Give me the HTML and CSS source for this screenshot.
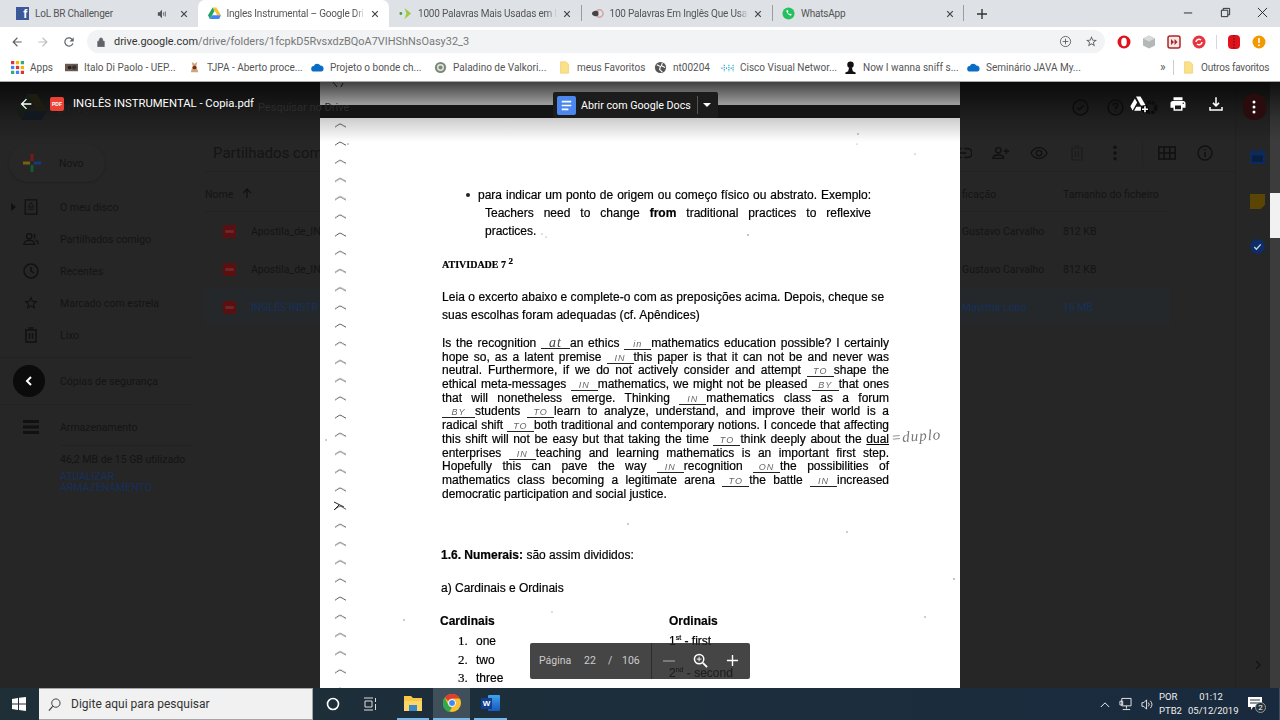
FILE: index.html
```html
<!DOCTYPE html>
<html lang="en">
<head>
    <meta charset="UTF-8">
    <meta name="viewport" content="width=device-width, initial-scale=1.0">
    <title>Ingles Instrumental - Google Drive</title>
    <link rel="stylesheet" href="styles.css">
</head>
<body>
    <svg class="sprite">
        <symbol id="close" viewBox="0 0 10 10"><path d="M1.5 1.5l7 7M8.5 1.5l-7 7" fill="none" stroke="currentColor" stroke-width="1.5"/></symbol>
        <symbol id="folder" viewBox="0 0 12 16"><path d="M1 1h7l3 3v11H1z" fill="#fbe08a" stroke="#e8c860" stroke-width=".7"/></symbol>
        <symbol id="cloud" viewBox="0 0 16 11"><path d="M4 10.500a3.500 3.500 0 0 1-.5-7A4.500 4.500 0 0 1 11.500 3 3.800 3.800 0 0 1 12.500 10.500z" fill="#0a6cc4"/></symbol>
        <symbol id="pdf" viewBox="0 0 14 14"><rect width="14" height="14" rx="1.500" fill="currentColor"/><rect x="2.500" y="5.500" width="9" height="3" fill="#6c2a2a"/></symbol>
    </svg>

    <!-- Tab strip -->
    <div class="tabstrip">
        <div class="tab">
            <span class="fav fav-fb">f</span>
            <span class="tab-title">LoL BR Challenger</span>
            <svg class="tab-sound" viewBox="0 0 12 12"><path d="M1 4h2l3-3v10L3 8H1z" fill="#555"/><path d="M8 4v4M10 3v6" stroke="#555" fill="none"/></svg>
            <svg class="tab-close"><use href="#close"/></svg>
        </div>
        <div class="tab tab-active">
            <svg class="fav" viewBox="0 0 14 13"><path d="M5 0h4l5 8.500h-4z" fill="#fbc02d"/><path d="M5 0l2 3.800L2 12.500 0 8.500z" fill="#1fa463"/><path d="M2 12.500l2.200-4H14l-2 4z" fill="#4285f4"/></svg>
            <span class="tab-title tab-fade">Ingles Instrumental – Google Dri</span>
            <svg class="tab-close"><use href="#close"/></svg>
        </div>
        <div class="tab tab-sep">
            <svg class="fav" viewBox="0 0 14 14"><circle cx="2" cy="7" r="1.500" fill="#43a047"/><path d="M6 1l7 6-7 6 2-6z" fill="#9ccc3c"/></svg>
            <span class="tab-title tab-fade">1000 Palavras Mais Usadas em In</span>
            <svg class="tab-close"><use href="#close"/></svg>
        </div>
        <div class="tab tab-sep">
            <svg class="fav" viewBox="0 0 14 14"><circle cx="9" cy="7" r="4" fill="none" stroke="#d0a0a0" stroke-width="1.500"/><path d="M1 7a4 3 0 0 1 7-2v4a4 3 0 0 1-7-2z" fill="#444"/></svg>
            <span class="tab-title tab-fade">100 Palavras Em Inglês Que Usan</span>
            <svg class="tab-close"><use href="#close"/></svg>
        </div>
        <div class="tab tab-sep tab-last">
            <svg class="fav" viewBox="0 0 14 14"><circle cx="7" cy="7" r="6.500" fill="#25c15f"/><path d="M4.500 4c1 3 2.500 4.500 5 5.500l1-1.500-2-1-.7.700C7 7.200 6.500 6.500 6.200 5.700l.7-.7-1-2z" fill="#fff"/></svg>
            <span class="tab-title">WhatsApp</span>
            <svg class="tab-close"><use href="#close"/></svg>
        </div>
        <svg class="newtab" viewBox="0 0 12 12"><path d="M6 1v10M1 6h10" stroke="#333" stroke-width="1.400"/></svg>
        <div class="winbtns">
            <svg viewBox="0 0 12 12"><path d="M1 6.500h9" stroke="#222"/></svg>
            <svg viewBox="0 0 12 12"><path d="M1.500 3.500h7v7h-7zM3.500 3.500v-2h7v7h-2" fill="none" stroke="#222"/></svg>
            <svg viewBox="0 0 12 12"><path d="M1 1l10 10M11 1L1 11" stroke="#222"/></svg>
        </div>
    </div>

    <!-- Address bar -->
    <div class="toolbar">
        <svg class="nav-icon" viewBox="0 0 24 24"><path d="M20 11H7.830l5.590-5.590L12 4l-8 8 8 8 1.410-1.410L7.830 13H20z" fill="#5f6368"/></svg>
        <svg class="nav-icon" viewBox="0 0 24 24"><path d="M4 11h12.170l-5.590-5.590L12 4l8 8-8 8-1.410-1.410L16.170 13H4z" fill="#bcbfc3"/></svg>
        <svg class="nav-icon" viewBox="0 0 24 24"><path d="M17.650 6.350A8 8 0 1 0 19.730 14h-2.080A6 6 0 1 1 12 6c1.660 0 3.140.690 4.220 1.780L13 11h7V4z" fill="#5f6368"/></svg>
        <div class="omnibox">
            <svg class="lock" viewBox="0 0 10 12"><path d="M1 5h8v7H1zM3 5V3a2 2 0 0 1 4 0v2" fill="#5f6368" stroke="#5f6368"/></svg>
            <span class="url"><b>drive.google.com</b>/drive/folders/1fcpkD5RvsxdzBQoA7VIHShNsOasy32_3</span>
            <svg class="omni-icon" viewBox="0 0 14 14"><circle cx="7" cy="7" r="5.500" fill="none" stroke="#5f6368"/><path d="M7 4v6M4 7h6" stroke="#5f6368"/></svg>
            <svg class="omni-icon" viewBox="0 0 24 24"><path d="M22 9.240l-7.190-.620L12 2 9.190 8.630 2 9.240l5.460 4.730L5.820 21 12 17.270 18.180 21l-1.630-7.030L22 9.240zM12 15.400l-3.760 2.270 1-4.280-3.320-2.880 4.380-.380L12 6.100l1.710 4.040 4.380.380-3.320 2.880 1 4.280L12 15.400z" fill="#5f6368"/></svg>
        </div>
        <div class="exts">
            <svg class="ext" viewBox="0 0 14 14"><circle cx="7" cy="7" r="6.500" fill="#e0121b"/><ellipse cx="7" cy="7" rx="2.800" ry="4.200" fill="#fff"/></svg>
            <svg class="ext" viewBox="0 0 14 14"><path d="M7 .500l6 3v7l-6 3-6-3v-7z" fill="#b4b8b8"/><path d="M7 .500l6 3-6 3-6-3z" fill="#d8dada"/></svg>
            <svg class="ext" viewBox="0 0 14 14"><rect x="1" y="1" width="12" height="12" rx="2" fill="#fbe5e5" stroke="#a82828" stroke-width="1.500"/><path d="M4 4l3 3-3 3zM7.500 4l3 3-3 3z" fill="#a82828"/></svg>
            <svg class="ext" viewBox="0 0 14 14"><circle cx="7" cy="7" r="6.500" fill="#e8343f"/><path d="M4 7a3 3 0 0 1 5-2M10 7a3 3 0 0 1-5 2" fill="none" stroke="#fff" stroke-width="1.500"/></svg>
            <span class="ext-sep"></span>
            <svg class="ext" viewBox="0 0 14 14"><rect x="1" y="0" width="12" height="14" rx="4" fill="#e0121b"/><path d="M7 0v14" stroke="#5a0a0a" stroke-dasharray="1.500 1.500"/></svg>
            <svg class="ext" viewBox="0 0 14 14"><circle cx="7" cy="7" r="6.500" fill="#f29900"/><path d="M7 3v5M7 9.500v1.500" stroke="#fff" stroke-width="1.600"/></svg>
        </div>
    </div>

    <!-- Bookmarks -->
    <div class="bookmarks">
        <div class="bm bm-apps">
            <svg class="bm-icon" viewBox="0 0 12 12"><path d="M0 0h3v3H0z" fill="#d33"/><path d="M4.500 0h3v3h-3z" fill="#f4b400"/><path d="M9 0h3v3H9z" fill="#3a7"/><path d="M0 4.500h3v3H0z" fill="#4285f4"/><path d="M4.500 4.500h3v3h-3z" fill="#d33"/><path d="M9 4.500h3v3H9z" fill="#f4b400"/><path d="M0 9h3v3H0z" fill="#3a7"/><path d="M4.500 9h3v3h-3z" fill="#4285f4"/><path d="M9 9h3v3H9z" fill="#d33"/></svg>
            Apps
        </div>
        <div class="bm bm-italo"><svg class="bm-icon" viewBox="0 0 14 12"><rect y="2" width="14" height="8" fill="#6b5a50"/><circle cx="5" cy="6" r="2" fill="#222"/><circle cx="10" cy="6" r="2.500" fill="#333"/></svg>Italo Di Paolo - UEP...</div>
        <div class="bm bm-tjpa"><svg class="bm-icon" viewBox="0 0 12 14"><path d="M3 1l3 2 3-2-1 4 2 7H2l2-7z" fill="#c8a878"/><circle cx="6" cy="7" r="2" fill="#8a2020"/></svg>TJPA - Aberto proce...</div>
        <div class="bm bm-bonde"><svg class="bm-icon"><use href="#cloud"/></svg>Projeto o bonde ch...</div>
        <div class="bm bm-valk"><svg class="bm-icon" viewBox="0 0 14 14"><circle cx="7" cy="7" r="6" fill="#7a8a7a"/><circle cx="7" cy="7" r="3" fill="none" stroke="#e8e8e0" stroke-width="1.500"/></svg>Paladino de Valkori...</div>
        <div class="bm bm-fav"><svg class="bm-icon"><use href="#folder"/></svg>meus Favoritos</div>
        <div class="bm bm-nt"><svg class="bm-icon" viewBox="0 0 14 14"><circle cx="7" cy="7" r="6" fill="#555"/><path d="M3 4l4 2-1 3 3 3M9 2l-1 3 4 2" fill="none" stroke="#fff" stroke-width="1.200"/></svg>nt00204</div>
        <div class="bm bm-cisco"><svg class="bm-icon" viewBox="0 0 14 12"><path d="M1 6v2M3.500 3v7M6 6v2M8.500 3v7M11 6v2M13 3v7" stroke="#2aa5c9" stroke-width="1.200" stroke-dasharray="1.500 .8"/></svg>Cisco Visual Networ...</div>
        <div class="bm bm-sniff"><svg class="bm-icon" viewBox="0 0 14 14"><circle cx="7" cy="4" r="3.500" fill="#111"/><path d="M5.500 7h3l1 4 3 1.500V14h-11v-1.500l3-1.500z" fill="#111"/></svg>Now I wanna sniff s...</div>
        <div class="bm bm-java"><svg class="bm-icon"><use href="#cloud"/></svg>Seminário JAVA My...</div>
        <span class="bm-more">»</span>
        <span class="bm-sep"></span>
        <div class="bm bm-other"><svg class="bm-icon"><use href="#folder"/></svg>Outros favoritos</div>
    </div>

    <!-- Drive dimmed behind the viewer, PDF page on top -->
    <div class="viewer">
        <div class="drive">
            <aside class="sidebar">
                <div class="novo">
                    <svg viewBox="0 0 20 20"><path d="M10 1v7" stroke="#7a1a15" stroke-width="3"/><path d="M10 12v7" stroke="#145a30" stroke-width="3"/><path d="M1 10h7" stroke="#7a6008" stroke-width="3"/><path d="M12 10h7" stroke="#123a80" stroke-width="3"/></svg>
                    Novo
                </div>
                <div class="side-item"><svg viewBox="0 0 16 18"><path d="M1.500 1h13v16h-13z" fill="none" stroke="#111" stroke-width="1.500"/><path d="M8 4l3 5H5zM5 11.500h6" fill="none" stroke="#111"/></svg>O meu disco<i class="caret"></i></div>
                <div class="side-item"><svg viewBox="0 0 18 14"><circle cx="7" cy="4" r="3" fill="none" stroke="#111" stroke-width="1.500"/><path d="M1 13c0-6 12-6 12 0zM12 1.500a3 3 0 0 1 0 5M14 8c2 .500 3 2 3 5" fill="none" stroke="#111" stroke-width="1.500"/></svg>Partilhados comigo</div>
                <div class="side-item"><svg viewBox="0 0 16 16"><circle cx="8" cy="8" r="7" fill="none" stroke="#111" stroke-width="1.500"/><path d="M8 4v4l3 2" fill="none" stroke="#111" stroke-width="1.500"/></svg>Recentes</div>
                <div class="side-item"><svg viewBox="0 0 24 24"><path d="M22 9.240l-7.190-.620L12 2 9.190 8.630 2 9.240l5.460 4.730L5.820 21 12 17.270 18.180 21l-1.630-7.030L22 9.240zM12 15.400l-3.760 2.270 1-4.280-3.320-2.880 4.380-.380L12 6.100l1.710 4.040 4.380.380-3.320 2.880 1 4.280L12 15.400z" fill="#111"/></svg>Marcado com estrela</div>
                <div class="side-item"><svg viewBox="0 0 14 16"><path d="M1 3h12M2 3v12h10V3M4.500 1h5M5.500 6v6M8.500 6v6" fill="none" stroke="#111" stroke-width="1.500"/></svg>Lixo</div>
                <div class="side-rule"></div>
                <div class="side-item">
                    <span class="collapse"><svg viewBox="0 0 8 12"><path d="M6 2L2 6l4 4" fill="none" stroke="#fff" stroke-width="2"/></svg></span>
                    Cópias de segurança
                </div>
                <div class="side-rule"></div>
                <div class="side-item side-store"><svg viewBox="0 0 16 14"><path d="M0 1.500h16M0 7h16M0 12.500h16" stroke="#111" stroke-width="3"/></svg>Armazenamento</div>
                <div class="store-rule"></div>
                <div class="store-used">46,2 MB de 15 GB utilizado</div>
                <div class="store-link">ATUALIZAR<br>ARMAZENAMENTO</div>
            </aside>

            <main class="files">
                <div class="files-top">
                    <span class="files-title">Partilhados comigo</span>
                    <div class="files-tools">
                        <svg viewBox="0 0 16 10"><path d="M7 1H4a4 4 0 0 0 0 8h3M9 1h3a4 4 0 0 1 0 8H9M5 5h6" fill="none" stroke="#111" stroke-width="1.500"/></svg>
                        <svg viewBox="0 0 20 14"><circle cx="7" cy="4" r="3" fill="none" stroke="#111" stroke-width="1.500"/><path d="M1 13c0-5 12-5 12 0zM16 2v6M13 5h6" fill="none" stroke="#111" stroke-width="1.500"/></svg>
                        <svg viewBox="0 0 20 14"><path d="M1 7c4-8 14-8 18 0-4 8-14 8-18 0z" fill="none" stroke="#111" stroke-width="1.500"/><circle cx="10" cy="7" r="3" fill="none" stroke="#111" stroke-width="1.500"/></svg>
                        <svg viewBox="0 0 14 16"><path d="M1 3h12M2 3v12h10V3M4.500 1h5M5.500 6v6M8.500 6v6" fill="none" stroke="#1c1c1c" stroke-width="1.200"/></svg>
                        <svg viewBox="0 0 4 14"><circle cx="2" cy="2" r="1.500" fill="#111"/><circle cx="2" cy="7" r="1.500" fill="#111"/><circle cx="2" cy="12" r="1.500" fill="#111"/></svg>
                        <span class="tools-sep"></span>
                        <svg viewBox="0 0 16 12"><path d="M.7.700h14.600v10.600H.7zM.7 6h14.600M5.500.700v10.600M10.500.700v10.600" fill="none" stroke="#111" stroke-width="1.400"/></svg>
                        <svg viewBox="0 0 16 16"><circle cx="8" cy="8" r="7" fill="none" stroke="#111" stroke-width="1.400"/><path d="M8 7v5M8 4v1.500" stroke="#111" stroke-width="1.500"/></svg>
                    </div>
                </div>
                <div class="file-row file-head">
                    <span>Nome <svg class="sort" viewBox="0 0 10 10"><path d="M5 10V1M1 5l4-4 4 4" fill="none" stroke="#111" stroke-width="1.300"/></svg></span>
                    <span>ficação</span>
                    <span>Tamanho do ficheiro</span>
                </div>
                <div class="file-row">
                    <span class="file-name"><svg class="pdf-dim"><use href="#pdf"/></svg>Apostila_de_IN</span>
                    <span>Gustavo Carvalho</span>
                    <span>812 KB</span>
                </div>
                <div class="file-row">
                    <span class="file-name"><svg class="pdf-dim"><use href="#pdf"/></svg>Apostila_de_IN</span>
                    <span>Gustavo Carvalho</span>
                    <span>812 KB</span>
                </div>
                <div class="file-row file-picked">
                    <span class="file-name"><svg class="pdf-dim"><use href="#pdf"/></svg>INGLÊS INSTR</span>
                    <span>Mayrtha Lobo</span>
                    <span>16 MB</span>
                </div>
            </main>

            <div class="sidepanel">
                <svg viewBox="0 0 14 14"><path d="M0 2h14v12H0z" fill="#0c2a5e"/><path d="M3 0v3M11 0v3" stroke="#0c2a5e" stroke-width="2"/><path d="M2 6h10v6H2z" fill="#0a1f40"/></svg>
                <svg viewBox="0 0 14 14"><path d="M0 0h14v10l-4 4H0z" fill="#5a4505"/></svg>
                <svg viewBox="0 0 14 14"><circle cx="7" cy="7" r="7" fill="#0e2c66"/><path d="M4 7.500l2 2 4-4.500" fill="none" stroke="#c8d0e0" stroke-width="1.300"/></svg>
                <svg class="panel-toggle" viewBox="0 0 8 12"><path d="M2 2l4 4-4 4" fill="none" stroke="#161616" stroke-width="1.500"/></svg>
            </div>
            <div class="scrollbar"><div class="scroll-thumb"></div></div>
        </div>

        <!-- Scanned page -->
        <div class="page">
            <svg class="rings" viewBox="0 0 640 606">
                <defs>
                    <pattern id="ring" width="40" height="18.200" y="39" patternUnits="userSpaceOnUse">
                        <path d="M15 6c2.500-1.500 4-3 5-3s3 1.500 6 3" fill="none" stroke="#444" stroke-width=".9"/>
                    </pattern>
                </defs>
                <rect width="40" height="606" y="34" fill="url(#ring)"/>
                <path d="M13 0l4 5M23 1l-2 4" stroke="#333" fill="none"/>
                <path d="M14 420l10 5M14 428l5-5" stroke="#222" fill="none"/>
                <!-- specks from the scan -->
                <g fill="#777">
                    <circle cx="28" cy="62" r=".7"/><circle cx="428" cy="153" r=".8"/><circle cx="222" cy="152" r=".6"/>
                    <circle cx="538" cy="52" r=".7"/><circle cx="537" cy="62" r=".5"/><circle cx="595" cy="72" r=".6"/>
                    <circle cx="542" cy="134" r=".7"/><circle cx="226" cy="155" r=".6"/><circle cx="308" cy="442" r=".7"/>
                    <circle cx="527" cy="450" r=".7"/><circle cx="634" cy="497" r=".8"/><circle cx="84" cy="538" r=".7"/>
                    <circle cx="605" cy="535" r=".7"/><circle cx="232" cy="530" r=".6"/><circle cx="6" cy="358" r=".7"/>
                </g>
            </svg>

            <div class="bullet-block">
                <div class="line line-first"><span class="dot"></span>para indicar um ponto de origem ou começo físico ou abstrato. Exemplo:</div>
                <div class="line line-just">Teachers need to change <b>from</b> traditional practices to reflexive</div>
                <div class="line">practices.</div>
            </div>

            <h4 class="activity">ATIVIDADE 7 <sup>2</sup></h4>

            <p class="prompt">Leia o excerto abaixo e complete-o com as preposições acima. Depois, cheque se<br>suas escolhas foram adequadas (cf. Apêndices)</p>

            <div class="excerpt">
                <div class="row">Is the recognition <span class="blank blank-at">at</span>an ethics <span class="blank blank-m">in</span>mathematics education possible? I certainly</div>
                <div class="row">hope so, as a latent premise <span class="blank blank-m">IN</span>this paper is that it can not be and never was</div>
                <div class="row">neutral. Furthermore, if we do not actively consider and attempt <span class="blank blank-m">TO</span>shape the</div>
                <div class="row">ethical meta-messages <span class="blank blank-m">IN</span>mathematics, we might not be pleased <span class="blank blank-m">BY</span>that ones</div>
                <div class="row">that will nonetheless emerge. Thinking <span class="blank blank-m">IN</span>mathematics class as a forum</div>
                <div class="row"><span class="blank blank-l">BY</span>students <span class="blank blank-m">TO</span>learn to analyze, understand, and improve their world is a</div>
                <div class="row">radical shift <span class="blank blank-m">TO</span>both traditional and contemporary notions. I concede that affecting</div>
                <div class="row">this shift will not be easy but that taking the time <span class="blank blank-m">TO</span>think deeply about the <u>dual</u><span class="note">=duplo</span></div>
                <div class="row">enterprises <span class="blank blank-m">IN</span>teaching and learning mathematics is an important first step.</div>
                <div class="row">Hopefully this can pave the way <span class="blank blank-m">IN</span>recognition <span class="blank blank-m">ON</span>the possibilities of</div>
                <div class="row">mathematics class becoming a legitimate arena <span class="blank blank-m">TO</span>the battle <span class="blank blank-m">IN</span>increased</div>
                <div class="row row-end">democratic participation and social justice.</div>
            </div>

            <p class="numerais"><b>1.6. Numerais:</b> são assim divididos:</p>
            <p class="sub">a) Cardinais e Ordinais</p>

            <div class="numbers">
                <div class="col-card">
                    <div class="col-head">Cardinais</div>
                    <div class="num"><span class="n">1.</span>one</div>
                    <div class="num"><span class="n">2.</span>two</div>
                    <div class="num"><span class="n">3.</span>three</div>
                </div>
                <div class="col-ord">
                    <div class="col-head">Ordinais</div>
                    <div class="ord">1<sup>st</sup> - first</div>
                    <div class="ord ord-2">2<sup>nd</sup> - second</div>
                </div>
            </div>
        </div>

        <!-- Viewer chrome -->
        <div class="shade"></div>
        <div class="shade-band"></div>
        <svg class="under-logo" viewBox="0 0 30 26"><path d="M10 0h10l10 17h-10z" fill="#1e1b10"/><path d="M10 0l5 8-10 18L0 17z" fill="#141c16"/><path d="M5 26l5-9h20l-5 9z" fill="#111820"/></svg>
        <span class="under-drive">Drive</span>
        <div class="under-search">Pesquisar no Drive</div>
        <div class="under-tools">
            <svg viewBox="0 0 16 16"><circle cx="8" cy="8" r="7" fill="none" stroke="#0c0c0c" stroke-width="1.400"/><path d="M5 8l2 2 4-4" fill="none" stroke="#0c0c0c" stroke-width="1.400"/></svg>
            <svg viewBox="0 0 16 16"><circle cx="8" cy="8" r="7" fill="none" stroke="#0c0c0c" stroke-width="1.400"/><path d="M6 6a2 2 0 1 1 2 2v2M8 11.500v1" fill="none" stroke="#0c0c0c" stroke-width="1.400"/></svg>
            <svg viewBox="0 0 16 16"><circle cx="8" cy="8" r="5" fill="none" stroke="#0c0c0c" stroke-width="3" stroke-dasharray="3 1"/></svg>
        </div>
        <header class="viewer-head">
            <svg class="head-back" viewBox="0 0 24 24"><path d="M20 11H7.830l5.590-5.590L12 4l-8 8 8 8 1.410-1.410L7.830 13H20z" fill="#fff"/></svg>
            <span class="head-pdf">PDF</span>
            <span class="head-title">INGLÊS INSTRUMENTAL - Copia.pdf</span>
            <div class="open-with">
                <svg viewBox="0 0 20 20"><rect width="20" height="20" rx="2" fill="#4b87ee"/><path d="M5 6h10M5 10h10M5 14h7" stroke="#fff" stroke-width="1.800"/></svg>
                <span>Abrir com Google Docs</span>
                <i class="open-sep"></i>
                <i class="open-caret"></i>
            </div>
            <div class="head-tools">
                <svg viewBox="0 0 26 24"><path d="M9 2h6l7 12h-6.500zM7.500 4.500L1.500 15l3 5.500L10.500 10zM6.500 21l3-5.500h6v5.500z" fill="#fff"/><path d="M21 14v10M16 19h10" stroke="#000" stroke-width="5"/><path d="M21 15v8M17 19h8" stroke="#fff" stroke-width="2.200"/></svg>
                <svg viewBox="0 0 24 24"><path d="M19 8H5c-1.660 0-3 1.340-3 3v6h4v4h12v-4h4v-6c0-1.660-1.340-3-3-3zm-3 11H8v-5h8v5zm3-7c-.55 0-1-.45-1-1s.45-1 1-1 1 .45 1 1-.45 1-1 1zm-1-9H6v4h12V3z" fill="#fff"/></svg>
                <svg viewBox="0 0 24 24"><path d="M12 3v11M8 10.500l4 4 4-4M4 16v4h16v-4" fill="none" stroke="#fff" stroke-width="2"/></svg>
                <span class="head-more"><svg viewBox="0 0 4 14"><circle cx="2" cy="2" r="1.500" fill="#fff"/><circle cx="2" cy="7" r="1.500" fill="#fff"/><circle cx="2" cy="12" r="1.500" fill="#fff"/></svg></span>
            </div>
        </header>

        <div class="pagebar">
            <span class="pb-label">Página</span>
            <span class="pb-cur">22</span>
            <span class="pb-slash">/</span>
            <span class="pb-total">106</span>
            <i class="pb-sep"></i>
            <svg class="pb-minus" viewBox="0 0 14 14"><path d="M1 7h12" stroke="#8a8a8a" stroke-width="1.500"/></svg>
            <svg class="pb-zoom" viewBox="0 0 16 16"><circle cx="6.500" cy="6.500" r="5" fill="none" stroke="#fff" stroke-width="1.600"/><path d="M10.500 10.500l4.500 4.500" stroke="#fff" stroke-width="2"/><path d="M6.500 4v5M4 6.500h5" stroke="#fff"/></svg>
            <svg class="pb-plus" viewBox="0 0 14 14"><path d="M7 1v12M1 7h12" stroke="#fff" stroke-width="1.500"/></svg>
        </div>
    </div>

    <!-- Windows taskbar -->
    <div class="taskbar">
        <svg class="start" viewBox="0 0 14 14"><path d="M0 2l6-1v5.500H0zM7 .800L14 0v6.500H7zM0 7.500h6V13l-6-1zM7 7.500h7V14l-7-1z" fill="#fff"/></svg>
        <div class="searchbox">
            <svg viewBox="0 0 14 14"><circle cx="8.500" cy="5.500" r="4.500" fill="none" stroke="#333"/><path d="M5 9l-4 4.500" stroke="#333" stroke-width="1.200"/></svg>
            Digite aqui para pesquisar
        </div>
        <svg class="cortana" viewBox="0 0 14 14"><circle cx="7" cy="7" r="5.500" fill="none" stroke="#fff" stroke-width="1.600"/></svg>
        <svg class="taskview" viewBox="0 0 14 14"><path d="M1 1h9M1 13h9M2 4h7v6H2zM12.500 1v4M12.500 7v6" fill="none" stroke="#ddd"/></svg>
        <span class="app app-explorer"><svg viewBox="0 0 18 16"><path d="M0 1h7l2 2h9v13H0z" fill="#f7c844"/><path d="M0 6h18v10H0z" fill="#fbd76a"/><path d="M5 10h8v6H5z" fill="#3a88c8"/></svg></span>
        <span class="app app-chrome"><svg viewBox="0 0 18 18"><circle cx="9" cy="9" r="9" fill="#fbc02d"/><path d="M9 0a9 9 0 0 1 7.800 4.500H9a4.500 4.500 0 0 0-4 2.500L1.800 3.500A9 9 0 0 1 9 0z" fill="#e33b2e"/><path d="M1.800 3.500L5.200 11A4.500 4.500 0 0 0 9 13.500L6 18A9 9 0 0 1 1.800 3.500z" fill="#2da94f"/><circle cx="9" cy="9" r="3.500" fill="#4285f4" stroke="#fff"/></svg></span>
        <span class="app app-word"><span class="word-back"></span><span class="word-w">W</span></span>
        <div class="tray">
            <svg class="tray-up" viewBox="0 0 12 8"><path d="M1 7l5-5 5 5" fill="none" stroke="#eee" stroke-width="1.200"/></svg>
            <svg class="tray-net" viewBox="0 0 14 14"><path d="M3 1h10v8H3zM8 9v3M4 13h8M1 4h3v4H1z" fill="none" stroke="#eee"/></svg>
            <svg class="tray-vol" viewBox="0 0 14 14"><path d="M1 5h2l3-3v10L3 9H1z" fill="none" stroke="#eee"/><path d="M8 5a3 3 0 0 1 0 4M10 3a6 6 0 0 1 0 8" fill="none" stroke="#eee"/></svg>
            <div class="tray-lang">POR<br>PTB2</div>
            <div class="tray-clock">01:12<br>05/12/2019</div>
            <span class="tray-note">
                <svg viewBox="0 0 14 14"><path d="M0 0h14v10H5l-2 3v-3H0z" fill="#fff"/><path d="M2 3h10M2 6h10" stroke="#24323c"/></svg>
                <span class="note-badge">2</span>
            </span>
        </div>
    </div>
</body>
</html>
```

FILE: styles.css
```css
/* Page frame */
* {
    box-sizing: border-box;
}

body {
    margin: 0;
    width: 1280px;
    height: 720px;
    overflow: hidden;
    display: flex;
    flex-direction: column;
    font-family: Roboto, "Liberation Sans", sans-serif;
    background-color: #262626;
}

svg {
    display: block;
    flex: none;
}

.sprite {
    display: none;
}

/* Tab strip */
.tabstrip {
    height: 27px;
    padding-left: 6px;
    display: flex;
    align-items: stretch;
    background-color: #dee1e6;
}

.tab {
    position: relative;
    width: 191.500px;
    padding: 0 8px 0 10px;
    display: flex;
    align-items: center;
    font-size: 10px;
    letter-spacing: -0.2px;
    color: #555;
}

.tab-active {
    background-color: #fff;
    border-radius: 7px 7px 0 0;
}

.tab-sep::after {
    content: "";
    position: absolute;
    left: 0;
    top: 5px;
    height: 16px;
    border-left: 1px solid #9a9ca0;
}

.tab-active + .tab-sep::after {
    display: none;
}

.tab-last::before {
    content: "";
    position: absolute;
    right: 0;
    top: 5px;
    height: 16px;
    border-left: 1px solid #9a9ca0;
}

.fav {
    width: 13px;
    height: 13px;
    margin-right: 6px;
    flex: none;
}

.fav-fb {
    display: block;
    background-color: #3b5998;
    color: #fff;
    font: bold 12px/15px "Liberation Sans", sans-serif;
    text-align: right;
    padding-right: 2px;
    overflow: hidden;
}

.tab-title {
    flex: 1;
    min-width: 0;
    white-space: nowrap;
}

.tab-fade {
    -webkit-mask-image: linear-gradient(to right, #000 93%, transparent 100%);
    mask-image: linear-gradient(to right, #000 93%, transparent 100%);
}

.tab-sound {
    width: 10px;
    height: 10px;
    margin-right: 7px;
}

.tab-close {
    width: 8px;
    height: 8px;
    margin-left: 6px;
    margin-right: 2px;
    color: #444;
}

.newtab {
    width: 12px;
    height: 12px;
    margin: 8px 0 0 12px;
}

.winbtns {
    margin-left: auto;
    width: 97.500px;
    padding-right: 12px;
    display: flex;
    justify-content: space-between;
    padding-top: 7px;
}

.winbtns svg {
    width: 11px;
    height: 11px;
}

/* Address bar */
.toolbar {
    height: 28px;
    padding: 3px 0 2px 10px;
    display: flex;
    align-items: center;
    background-color: #fff;
}

.nav-icon {
    width: 14px;
    height: 14px;
    margin-right: 12px;
}

.omnibox {
    margin-left: -1px;
    width: 1018px;
    height: 23px;
    padding: 0 7px 0 10px;
    display: flex;
    align-items: center;
    background-color: #f1f3f4;
    border-radius: 12px;
}

.lock {
    width: 8px;
    height: 10px;
    margin-right: 9px;
}

.url {
    flex: 1;
    font-size: 10.930px;
    color: #777;
    white-space: nowrap;
}

.url b {
    font-weight: 400;
    color: #333;
}

.omni-icon {
    width: 13px;
    height: 13px;
    margin-left: 13px;
}

.exts {
    margin-left: 12px;
    display: flex;
    align-items: center;
}

.ext {
    width: 14px;
    height: 14px;
    margin-right: 11px;
}

.ext-sep {
    width: 1px;
    height: 14px;
    margin: 0 10px 0 -1px;
    background-color: #d8d8d8;
}

/* Bookmarks */
.bookmarks {
    height: 27px;
    padding: 0 0 2px 11px;
    display: flex;
    align-items: center;
    background-color: #fff;
    border-bottom: 1px solid #a8a8a8;
    font-size: 10px;
    color: #555;
    white-space: nowrap;
}

.bm {
    display: flex;
    align-items: center;
    flex: none;
}

.bm-icon {
    width: 13px;
    height: 13px;
    margin-right: 6px;
}

.bm-apps { width: 54px; }
.bm-italo { width: 123px; }
.bm-tjpa { width: 123px; }
.bm-bonde { width: 123px; }
.bm-valk { width: 124px; }
.bm-fav { width: 96px; }
.bm-nt { width: 67px; }
.bm-cisco { width: 123px; }
.bm-sniff { width: 123px; }
.bm-java { width: 193px; }

.bm-more {
    width: 13px;
    font-size: 12px;
}

.bm-sep {
    width: 1px;
    height: 15px;
    margin-right: 8px;
    background-color: #ccc;
}

.bm-other {
    letter-spacing: -0.2px;
}

/* Dimmed Drive behind the viewer */
.viewer {
    position: relative;
    height: 606px;
    overflow: hidden;
    background-color: #262626;
}

.drive {
    height: 100%;
    display: flex;
    color: #141414;
    font-size: 10.500px;
}

.sidebar {
    width: 205px;
    padding-top: 62px;
    flex: none;
}

.novo {
    width: 96px;
    height: 38px;
    margin: 0 0 9px 9px;
    padding-left: 13px;
    display: flex;
    align-items: center;
    gap: 17px;
    border-radius: 19px;
    background-color: #272727;
    box-shadow: 0 1px 2px #202020;
}

.novo svg {
    width: 20px;
    height: 20px;
}

.side-item {
    position: relative;
    height: 32px;
    padding-left: 60px;
    display: flex;
    align-items: center;
}

.side-item > svg {
    position: absolute;
    left: 23px;
    top: 8px;
    width: 16px;
    height: 16px;
}

.caret {
    position: absolute;
    left: 11px;
    top: 12px;
    border-left: 5px solid #111;
    border-top: 4px solid transparent;
    border-bottom: 4px solid transparent;
}

.side-rule {
    height: 1px;
    margin: 6px 13px 7px 0;
    background-color: #222;
}

.side-rule + .side-item + .side-rule {
    margin: 7px 13px 6px 0;
}

.collapse {
    position: absolute;
    left: 13px;
    top: 0;
    width: 32px;
    height: 32px;
    display: flex;
    align-items: center;
    justify-content: center;
    border-radius: 50%;
    background-color: #0b0b0b;
}

.collapse svg {
    width: 8px;
    height: 12px;
}

.store-rule {
    height: 1px;
    margin: 2px 13px 7px 60px;
    background-color: #222;
}

.store-used {
    padding-left: 60px;
    line-height: 14px;
}

.store-link {
    margin-top: 4px;
    padding-left: 60px;
    line-height: 11px;
    color: #15305c;
}

.files {
    flex: 1;
    min-width: 0;
}

.files-top {
    height: 90px;
    padding: 52px 0 0 8px;
    display: flex;
    justify-content: space-between;
    border-bottom: 1px solid #222;
}

.files-title {
    font-size: 15px;
    line-height: 38px;
    height: 38px;
}

.files-tools {
    height: 38px;
    padding-right: 21px;
    display: flex;
    align-items: center;
    justify-content: flex-end;
    gap: 20px;
}

.files-tools svg {
    width: 18px;
    height: 16px;
}

.tools-sep {
    width: 1px;
    height: 26px;
    margin: 0 -5px 0 -2px;
    background-color: #222;
}

.file-row {
    width: 965px;
    height: 38px;
    display: grid;
    grid-template-columns: 757px 101px 107px;
    align-items: center;
}

.file-head {
    height: 40px;
    padding-top: 5px;
    border-bottom: 1px solid #222;
}

.file-head svg {
    display: inline-block;
    width: 10px;
    height: 10px;
    margin-left: 6px;
}

.file-name {
    display: flex;
    align-items: center;
    padding-left: 18px;
    gap: 15px;
}

.pdf-dim {
    width: 13px;
    height: 13px;
    color: #5a1010;
}

.file-picked {
    background-color: #24282b;
    color: #15305c;
}

.sidepanel {
    position: relative;
    width: 35px;
    padding: 67px 0 0 9px;
    display: flex;
    flex-direction: column;
    align-items: center;
    gap: 30px;
    border-left: 1px solid #222;
}

.sidepanel svg {
    width: 15px;
    height: 15px;
}

.sidepanel .panel-toggle {
    position: absolute;
    left: 18px;
    top: 577px;
    width: 8px;
    height: 12px;
}

.scrollbar {
    width: 10px;
    background-color: #3c3c3c;
    padding-top: 111px;
}

.scroll-thumb {
    height: 45px;
    background-color: #f1f1f1;
}

/* Scanned PDF page */
.page {
    position: absolute;
    left: 320px;
    top: 0;
    bottom: 0;
    width: 640px;
    padding: 104px 0 0 122px;
    background-color: #fff;
    color: #000;
    font-family: "Liberation Sans", sans-serif;
    font-size: 12px;
    overflow: hidden;
    -webkit-text-stroke: 0.2px #000;
    filter: blur(0.35px);
}

.rings {
    position: absolute;
    left: 0;
    top: 0;
    width: 640px;
    height: 606px;
}

.bullet-block {
    width: 429px;
    padding-left: 43px;
    line-height: 18px;
}

.bullet-block .line-first {
    position: relative;
    margin-left: -7px;
    text-align: justify;
    text-align-last: justify;
}

.line-just {
    text-align: justify;
    text-align-last: justify;
}

.dot {
    position: absolute;
    left: -12px;
    top: 7px;
    width: 4px;
    height: 4px;
    border-radius: 50%;
    background-color: #222;
}

.activity {
    margin: 18px 0 0;
    font: bold 10px/14px "Liberation Serif", serif;
}

.activity sup {
    font-size: 9px;
    line-height: 0;
}

.prompt {
    margin: 16px 0 0;
    line-height: 18px;
    letter-spacing: 0.05px;
    white-space: nowrap;
}

.excerpt {
    width: 447px;
    margin-top: 13px;
}

.row {
    position: relative;
    height: 13.700px;
    line-height: 13.700px;
    text-align: justify;
    text-align-last: justify;
}

.row-end {
    text-align-last: left;
}

.blank {
    display: inline-block;
    height: 12px;
    text-align: center;
    text-align-last: center;
    border-bottom: 1px solid #222;
    font: italic 9px/12px "Liberation Sans", sans-serif;
    letter-spacing: 1px;
    color: #666;
    -webkit-text-stroke: 0;
}

.blank-at {
    width: 29px;
    font: italic 14px/12px "Liberation Serif", serif;
    color: #444;
}

.blank-m {
    width: 27px;
}

.blank-l {
    width: 33px;
}

.note {
    position: absolute;
    left: 449px;
    top: -5px;
    font: italic 15px/16px "Liberation Serif", serif;
    letter-spacing: 1px;
    color: #777;
    -webkit-text-stroke: 0;
    transform: rotate(-4deg);
}

.numerais {
    margin: 45px 0 0 -1px;
    line-height: 18px;
}

.sub {
    margin: 15px 0 0 -1px;
    line-height: 18px;
}

.numbers {
    margin: 15px 0 0 -2px;
    display: flex;
}

.col-card {
    width: 229px;
}

.col-head {
    font-weight: bold;
    line-height: 18px;
}

.num {
    display: flex;
    line-height: 18.500px;
    padding-left: 18px;
}

.col-head + .num {
    margin-top: 2px;
}

.n {
    width: 18px;
    font-family: "Liberation Serif", serif;
    font-size: 13px;
}

.ord {
    line-height: 18px;
    margin-top: 2px;
}

.ord sup {
    font-size: 7px;
    line-height: 0;
}

.ord-2 {
    margin-top: 14px;
}

/* Viewer chrome */
.shade {
    position: absolute;
    left: 0;
    right: 0;
    top: 0;
    height: 60px;
    background: linear-gradient(rgba(0, 0, 0, 0.74), rgba(0, 0, 0, 0.4) 36%, rgba(0, 0, 0, 0.2) 60%, rgba(0, 0, 0, 0));
}

.shade-band {
    position: absolute;
    left: 320px;
    top: 23px;
    width: 640px;
    height: 13px;
    background-color: #141414;
}

.under-logo {
    position: absolute;
    left: 17px;
    top: 12px;
    width: 30px;
    height: 26px;
}

.under-drive {
    position: absolute;
    left: 57px;
    top: 16px;
    font-size: 15px;
    line-height: 20px;
    color: #202020;
}

.under-search {
    position: absolute;
    left: 258px;
    top: 19px;
    font-size: 11px;
    line-height: 14px;
    white-space: nowrap;
    color: #2c2c2c;
}

.under-tools svg {
    position: absolute;
    top: 17px;
    width: 17px;
    height: 17px;
}

.under-tools svg:nth-child(1) { left: 1072px; }
.under-tools svg:nth-child(2) { left: 1107px; }
.under-tools svg:nth-child(3) { left: 1142px; }

.viewer-head {
    position: absolute;
    left: 0;
    right: 0;
    top: 0;
    height: 44px;
    color: #fff;
}

.head-back {
    position: absolute;
    left: 18px;
    top: 14px;
    width: 16px;
    height: 16px;
}

.head-pdf {
    position: absolute;
    left: 50px;
    top: 15px;
    width: 14px;
    height: 14px;
    border-radius: 2px;
    background-color: #ea4335;
    font: bold 5px/14px "Liberation Sans", sans-serif;
    text-align: center;
}

.head-title {
    position: absolute;
    left: 73px;
    top: 14px;
    font-size: 11.300px;
    line-height: 16px;
    white-space: nowrap;
}

.open-with {
    position: absolute;
    left: 553px;
    top: 10px;
    width: 165px;
    height: 26px;
    padding-left: 4px;
    display: flex;
    align-items: center;
    background-color: #1c1c1c;
    border-radius: 2px;
    font-size: 10.700px;
}

.open-with svg {
    width: 19px;
    height: 19px;
    margin-right: 5px;
}

.open-sep {
    position: absolute;
    left: 144px;
    top: 4px;
    height: 18px;
    border-left: 1px solid #555;
}

.open-caret {
    position: absolute;
    left: 150px;
    top: 11px;
    border-top: 4px solid #fff;
    border-left: 4px solid transparent;
    border-right: 4px solid transparent;
}

.head-tools svg {
    position: absolute;
    top: 13px;
    width: 18px;
    height: 18px;
}

.head-tools svg:nth-child(1) { left: 1129px; width: 20px; }
.head-tools svg:nth-child(2) { left: 1169px; }
.head-tools svg:nth-child(3) { left: 1207px; }

.head-more {
    position: absolute;
    left: 1243px;
    top: 12px;
    width: 23px;
    height: 26px;
    border-radius: 10px;
    background-color: #2a0c0c;
}

.head-tools .head-more svg {
    left: 9px;
    top: 6px;
    width: 4px;
    height: 14px;
}

.pagebar {
    position: absolute;
    left: 530px;
    top: 561px;
    width: 220px;
    height: 36px;
    background-color: rgba(36, 36, 36, 0.85);
    border-radius: 2px;
    color: #ccc;
    font-size: 10.500px;
    line-height: 36px;
}

.pagebar span,
.pagebar i,
.pagebar svg {
    position: absolute;
}

.pb-label { left: 9px; }
.pb-cur { left: 54px; }
.pb-slash { left: 78px; }
.pb-total { left: 92px; }

.pb-sep {
    left: 121px;
    top: 0;
    height: 36px;
    border-left: 1px solid #2c2c2c;
}

.pb-minus {
    left: 132px;
    top: 11px;
    width: 14px;
    height: 14px;
}

.pb-zoom {
    left: 163px;
    top: 10px;
    width: 15px;
    height: 15px;
}

.pb-plus {
    left: 196px;
    top: 11px;
    width: 13px;
    height: 13px;
}

/* Taskbar */
.taskbar {
    position: relative;
    height: 32px;
    display: flex;
    align-items: center;
    background: linear-gradient(to right, #1e2f37, #1c2e3d 60%, #1a2a3e);
    color: #eee;
}

.start {
    width: 14px;
    height: 14px;
    margin-left: 12px;
}

.searchbox {
    width: 274px;
    height: 32px;
    margin-left: 13px;
    padding-left: 9px;
    display: flex;
    align-items: center;
    gap: 10px;
    background-color: #f1f1f1;
    border: 1px solid #a0a6aa;
    border-left-width: 0;
    font-size: 12px;
    color: #333;
}

.searchbox svg {
    width: 13px;
    height: 13px;
}

.cortana {
    width: 14px;
    height: 14px;
    margin-left: 13px;
}

.taskview {
    width: 14px;
    height: 14px;
    margin-left: 23px;
}

.app {
    position: relative;
    height: 32px;
    display: flex;
    align-items: center;
    justify-content: center;
    border-bottom: 2px solid #76b9ed;
}

.app svg {
    width: 18px;
    height: 18px;
}

.app-explorer {
    width: 32px;
    margin-left: 20px;
}

.app-chrome {
    width: 37px;
    margin-left: 4px;
    background-color: #3f505b;
}

.app-word {
    width: 33px;
    margin-left: 4px;
}

.word-back {
    width: 12px;
    height: 16px;
    margin-left: 6px;
    border-radius: 1px;
    background: linear-gradient(#41a5ee, #2b7cd3 50%, #185abd);
}

.word-w {
    position: absolute;
    left: 7px;
    top: 10px;
    width: 11px;
    height: 11px;
    background-color: #103f91;
    color: #fff;
    font: bold 8px/11px "Liberation Sans", sans-serif;
    text-align: center;
}

.tray {
    margin-left: auto;
    padding-right: 2px;
    height: 32px;
    display: flex;
    align-items: center;
    border-right: 1px solid #3c5060;
    font-size: 9.500px;
}

.tray-up {
    width: 10px;
    height: 7px;
}

.tray-net {
    width: 13px;
    height: 14px;
    margin-left: 9px;
}

.tray-vol {
    width: 13px;
    height: 13px;
    margin-left: 9px;
}

.tray-lang {
    margin-left: 5px;
    line-height: 14px;
    width: 29px;
}

.tray-clock {
    width: 46px;
    line-height: 14px;
    text-align: center;
}

.tray-note {
    position: relative;
    width: 16px;
    margin: 0 13px 0 14px;
}

.tray-note svg {
    width: 14px;
    height: 14px;
}

.note-badge {
    position: absolute;
    left: 7px;
    top: 5px;
    width: 11px;
    height: 11px;
    border-radius: 50%;
    background-color: #24323c;
    border: 1px solid #999;
    color: #fff;
    font-size: 8px;
    line-height: 9px;
    text-align: center;
}
```
